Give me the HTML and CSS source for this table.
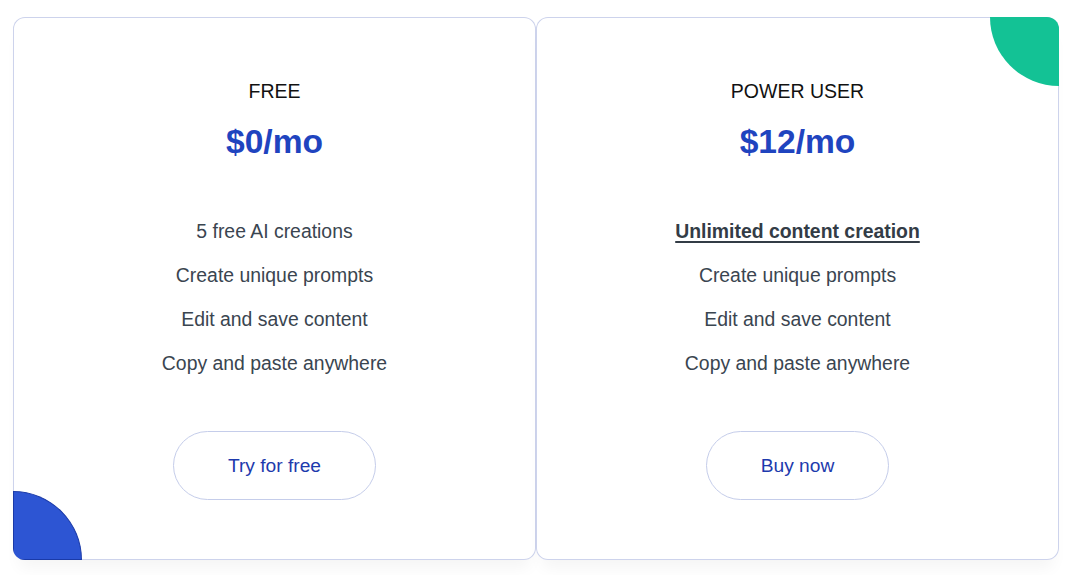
FILE: index.html
```html
<!DOCTYPE html>
<html lang="en">
<head>
<meta charset="utf-8">
<title>Pricing</title>
<link rel="stylesheet" href="styles.css">
</head>
<body>
<main class="plans">
  <section class="card">
    <span class="deco deco-blue"></span>
    <h2 class="plan-name">FREE</h2>
    <p class="price">$0/mo</p>
    <ul class="features">
      <li>5 free AI creations</li>
      <li>Create unique prompts</li>
      <li>Edit and save content</li>
      <li>Copy and paste anywhere</li>
    </ul>
    <a class="btn" href="#">Try for free</a>
  </section>
  <section class="card">
    <span class="deco deco-green"></span>
    <h2 class="plan-name">POWER USER</h2>
    <p class="price">$12/mo</p>
    <ul class="features">
      <li><strong class="hl">Unlimited content creation</strong></li>
      <li>Create unique prompts</li>
      <li>Edit and save content</li>
      <li>Copy and paste anywhere</li>
    </ul>
    <a class="btn" href="#">Buy now</a>
  </section>
</main>
</body>
</html>
```

FILE: styles.css
```css
* { box-sizing: border-box; }
html, body { margin: 0; padding: 0; background: #ffffff; }
body {
  font-family: "Liberation Sans", Arial, sans-serif;
  width: 1070px;
  height: 575px;
  overflow: hidden;
}
.plans {
  display: grid;
  grid-template-columns: 523px 523px;
  padding: 17px 0 0 13px;
}
.card {
  position: relative;
  height: 543px;
  border-radius: 12px;
  overflow: hidden;
  background: #fff;
  box-shadow: inset 0 0 0 1px #cdd3ec, 0 14px 16px -6px rgba(0, 0, 0, 0.045);
  display: flex;
  flex-direction: column;
  align-items: center;
  padding-top: 62px;
}
.deco {
  position: absolute;
  width: 69px;
  height: 69px;
}
.deco-blue {
  left: 0;
  bottom: 0;
  background: #2d55d3;
  border: 1.5px solid #1a3aa8;
  border-top-right-radius: 100%;
}
.deco-green {
  right: 0;
  top: 0;
  background: #13c295;
  border-bottom-left-radius: 100%;
}
.plan-name {
  margin: 0;
  font-size: 19.5px;
  font-weight: 400;
  line-height: 24px;
  color: #111;
}
.price {
  margin: 19px 0 0;
  font-size: 33.6px;
  line-height: 40px;
  font-weight: 700;
  color: #1f44bf;
}
.features {
  list-style: none;
  margin: 47px 0 0;
  padding: 0;
  text-align: center;
  font-size: 19.4px;
  line-height: 44px;
  color: #3a4550;
}
.hl {
  text-decoration: underline;
  text-decoration-thickness: 2px;
  text-underline-offset: 3px;
  color: #333c46;
}
.btn {
  margin-top: 46px;
  display: inline-block;
  padding: 0 53.5px;
  height: 69px;
  line-height: 67px;
  border: 1px solid #c5cdea;
  border-radius: 35px;
  font-size: 19.2px;
  color: #1d3aad;
  text-decoration: none;
}
```
